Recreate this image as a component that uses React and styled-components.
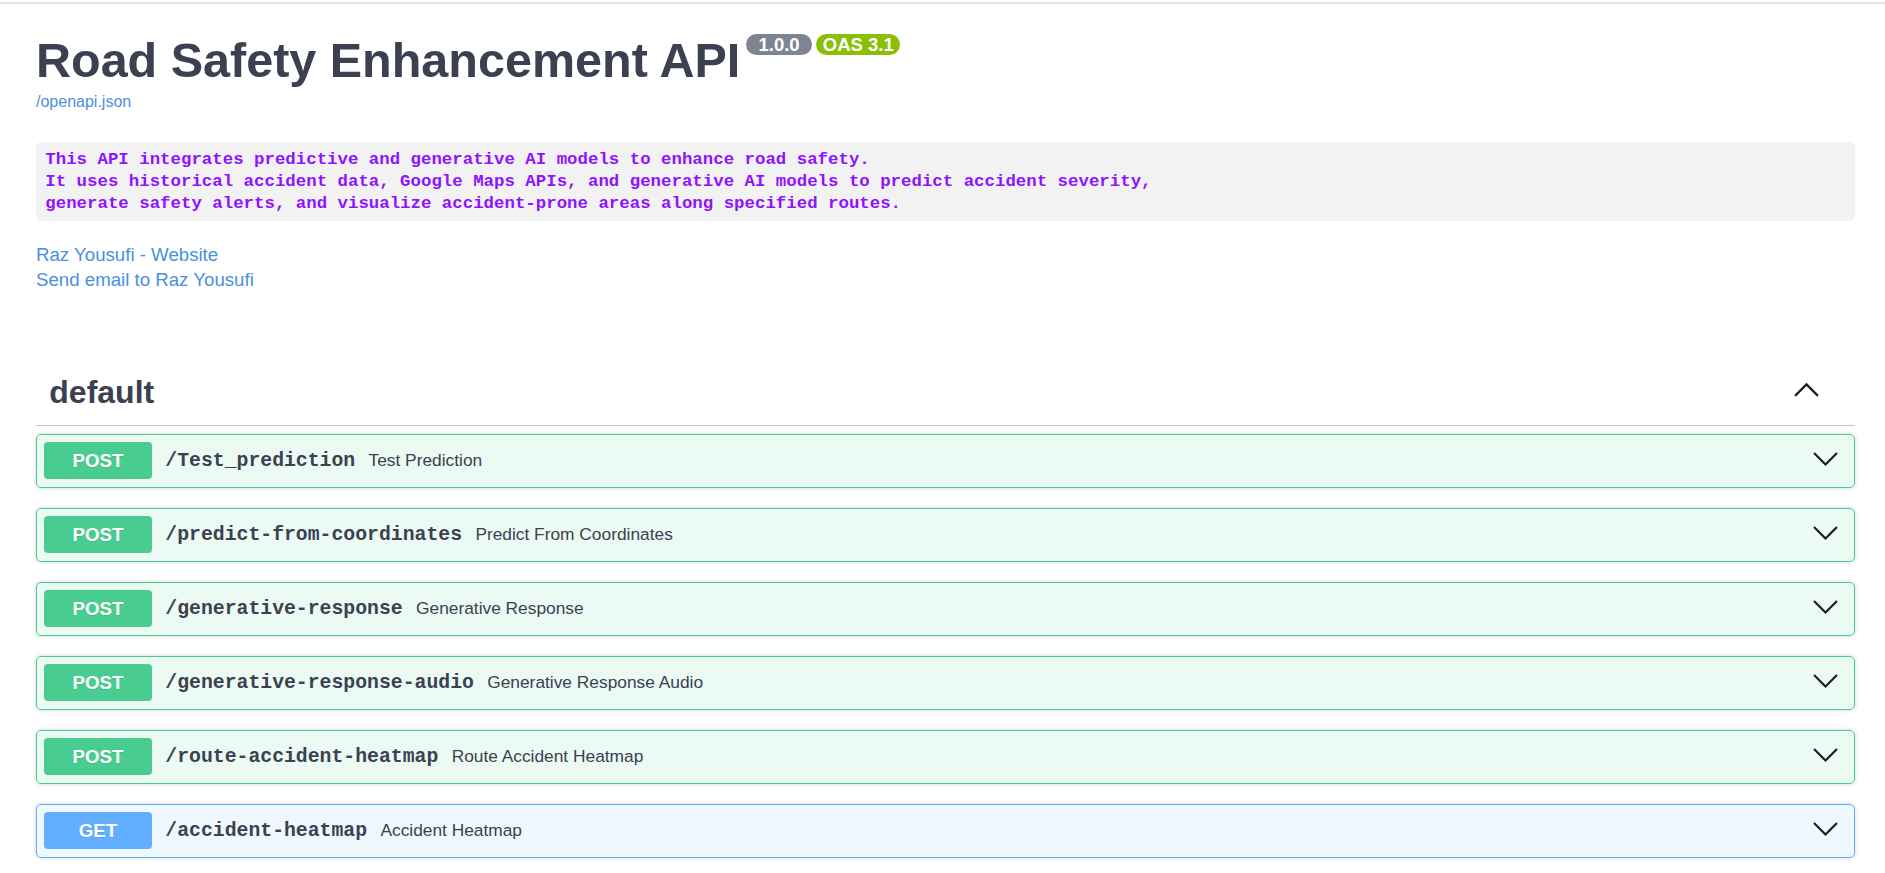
import styled, { createGlobalStyle } from "styled-components";

const GlobalStyle = createGlobalStyle`
  html, body {
    margin: 0;
    padding: 0;
    background: #fff;
  }
  body {
    font-family: "Liberation Sans", Arial, sans-serif;
    color: #3b4151;
  }
`;

const METHOD_COLORS = {
  POST: { main: "#49cc90", soft: "rgba(73, 204, 144, 0.1)" },
  GET: { main: "#61affe", soft: "rgba(97, 175, 254, 0.1)" },
};

const operations = [
  { method: "POST", path: "/Test_prediction", summary: "Test Prediction" },
  { method: "POST", path: "/predict-from-coordinates", summary: "Predict From Coordinates" },
  { method: "POST", path: "/generative-response", summary: "Generative Response" },
  { method: "POST", path: "/generative-response-audio", summary: "Generative Response Audio" },
  { method: "POST", path: "/route-accident-heatmap", summary: "Route Accident Heatmap" },
  { method: "GET", path: "/accident-heatmap", summary: "Accident Heatmap" },
];

const TopRule = styled.div`
  margin-top: 2px;
  height: 2px;
  background: #e4e4e4;
`;

const Wrapper = styled.div`
  padding: 0 30px 0 36px;
`;

const Info = styled.div`
  padding-top: 29px;
`;

const Title = styled.h2`
  display: flex;
  align-items: flex-start;
  margin: 0;
  font-size: 48.5px;
  line-height: 55px;
  font-weight: 700;
  color: #3b4151;
`;

const Badge = styled.small`
  margin: 1px 0 0 ${(p) => p.$gap}px;
  padding: 0 ${(p) => p.$pad}px;
  height: 21px;
  line-height: 21px;
  border-radius: 57px;
  background: ${(p) => p.$bg};
  color: #fff;
  font-size: 18.5px;
  font-weight: 700;
  white-space: pre;
`;

const SpecLink = styled.a`
  display: block;
  margin-top: 5px;
  font-size: 16px;
  line-height: 18px;
  color: #4990e2;
  text-decoration: none;
`;

const Description = styled.pre`
  margin: 31px 0 0;
  padding: 6.7px 9.3px;
  background: rgba(0, 0, 0, 0.05);
  border-radius: 5px;
  font-family: "Liberation Mono", "DejaVu Sans Mono", monospace;
  font-size: 17.4px;
  line-height: 21.9px;
  font-weight: 700;
  color: #9012fe;
  white-space: pre;
`;

const Contact = styled.div`
  margin-top: 20.5px;
  display: flex;
  flex-direction: column;
  align-items: flex-start;
`;

const ContactLink = styled.a`
  font-size: 18.67px;
  line-height: 25px;
  color: #4990e2;
  text-decoration: none;
`;

const TagSection = styled.section`
  margin-top: 70.5px;
`;

const TagHeader = styled.div`
  display: flex;
  align-items: center;
  padding: 12px 35px 14.5px 13.3px;
  margin-bottom: 7.7px;
  border-bottom: 1px solid rgba(59, 65, 81, 0.3);
`;

const TagName = styled.h3`
  flex: 1;
  margin: 0;
  font-size: 32px;
  line-height: 36.8px;
  font-weight: 700;
  color: #3b4151;
`;

const Chevron = styled.svg`
  width: 27px;
  height: 27px;
  flex: none;
  margin-right: ${(p) => p.$right || 0}px;
`;

const OpBlock = styled.div`
  margin-bottom: 20px;
  border: 1px solid ${(p) => p.$main};
  border-radius: 5px;
  background: ${(p) => p.$soft};
  box-shadow: 0 0 4px rgba(0, 0, 0, 0.19);
`;

const Summary = styled.div`
  display: flex;
  align-items: center;
  padding: 7px 7px 8px 7px;
`;

const MethodTag = styled.span`
  min-width: 108px;
  padding: 8px 0;
  border-radius: 4px;
  background: ${(p) => p.$main};
  color: #fff;
  font-size: 18.67px;
  line-height: 21px;
  font-weight: 700;
  text-align: center;
  text-shadow: 0 1px 0 rgba(0, 0, 0, 0.1);
`;

const PathText = styled.span`
  padding: 0 13.3px;
  font-family: "Liberation Mono", "DejaVu Sans Mono", monospace;
  font-size: 19.8px;
  font-weight: 700;
  color: #3b4151;
`;

const SummaryText = styled.span`
  flex: 1;
  font-size: 17.33px;
  color: #3b4151;
`;

function Arrow({ up, right }) {
  const points = up ? "1.5,12.5 10,4 18.5,12.5" : "1.5,4.5 10,13 18.5,4.5";
  return (
    <Chevron viewBox="0 0 20 20" $right={right} aria-hidden="true">
      <polyline points={points} fill="none" stroke="#1b1b1b" strokeWidth="1.6" />
    </Chevron>
  );
}

function Operation({ method, path, summary }) {
  const c = METHOD_COLORS[method];
  return (
    <OpBlock $main={c.main} $soft={c.soft}>
      <Summary>
        <MethodTag $main={c.main}>{method}</MethodTag>
        <PathText>{path}</PathText>
        <SummaryText>{summary}</SummaryText>
        <Arrow right={8} />
      </Summary>
    </OpBlock>
  );
}

export default function App() {
  return (
    <>
      <GlobalStyle />
      <TopRule />
      <Wrapper>
        <Info>
          <Title>
            <span>Road Safety Enhancement API</span>
            <Badge $bg="#7d8492" $pad={7} $gap={6}>{" 1.0.0 "}</Badge>
            <Badge $bg="#89bf04" $pad={6.5} $gap={4.5}>OAS 3.1</Badge>
          </Title>
          <SpecLink href="#">/openapi.json</SpecLink>
          <Description>{`This API integrates predictive and generative AI models to enhance road safety.
It uses historical accident data, Google Maps APIs, and generative AI models to predict accident severity,
generate safety alerts, and visualize accident-prone areas along specified routes.`}</Description>
          <Contact>
            <ContactLink href="#">Raz Yousufi - Website</ContactLink>
            <ContactLink href="#">Send email to Raz Yousufi</ContactLink>
          </Contact>
        </Info>
        <TagSection>
          <TagHeader>
            <TagName>default</TagName>
            <Arrow up />
          </TagHeader>
          {operations.map((op) => (
            <Operation key={op.path} {...op} />
          ))}
        </TagSection>
      </Wrapper>
    </>
  );
}
